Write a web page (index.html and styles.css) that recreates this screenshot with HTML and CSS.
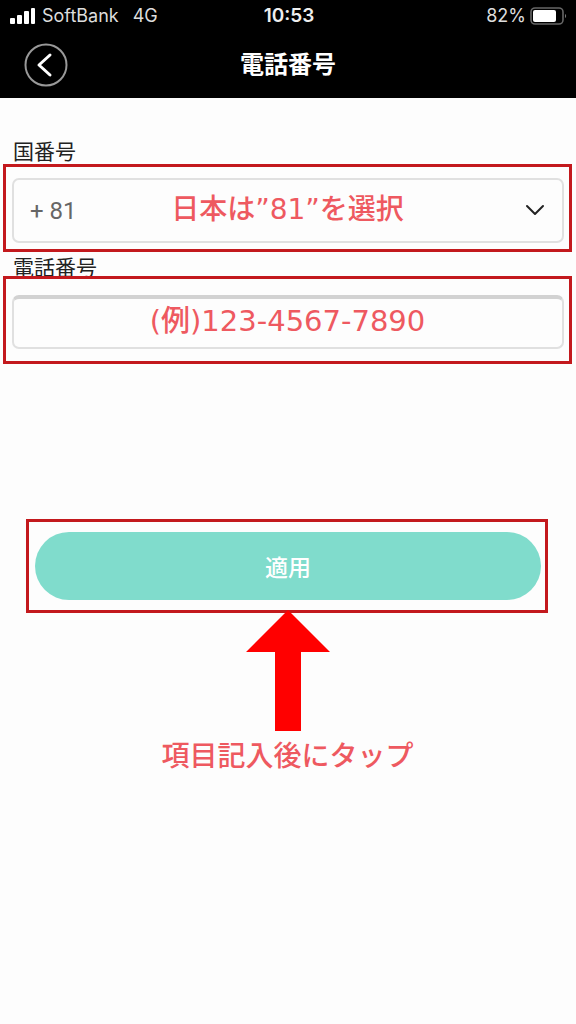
FILE: index.html
```
<!DOCTYPE html>
<html lang="ja">
<head>
  <meta charset="UTF-8">
  <title>電話番号</title>
  <meta name="viewport" content="width=device-width, initial-scale=1" />
  <link rel="stylesheet" href="styles.css">
</head>
<body>
  <header>
    <div class="status">
      <div class="carrier">
        <svg width="26" height="18" viewBox="0 0 26 18" fill="#fff">
          <rect x="0" y="11" width="5" height="6" rx="1" />
          <rect x="7" y="8" width="5" height="9" rx="1" />
          <rect x="14" y="4" width="5" height="13" rx="1" />
          <rect x="21" y="1" width="4" height="16" rx="1" />
        </svg>
        <span>SoftBank</span>
        <span class="network">4G</span>
      </div>
      <div class="time">10:53</div>
      <div class="battery">
        <span>82%</span>
        <svg width="38" height="20" viewBox="0 0 38 20">
          <rect x="1" y="2" width="32" height="16" rx="4" fill="none" stroke="#666" stroke-width="1.6" />
          <rect x="3" y="4" width="23" height="12" rx="2" fill="#fff" />
          <path d="M35 8c1.500 .6 1.500 3.400 0 4z" fill="#777" />
        </svg>
      </div>
    </div>
    <div class="nav">
      <button class="back" aria-label="戻る">
        <svg width="44" height="44" viewBox="0 0 44 44" fill="none">
          <circle cx="22" cy="22" r="20.500" stroke="#999" stroke-width="2" />
          <path d="M26 12l-11 10 11 10" stroke="#fff" stroke-width="3" stroke-linecap="round" stroke-linejoin="round" />
        </svg>
      </button>
      <h1>電話番号</h1>
      <span></span>
    </div>
  </header>

  <main>
    <label for="country">国番号</label>
    <div class="frame">
      <select id="country">
        <option value="81">+ 81</option>
      </select>
      <svg class="chevron" width="20" height="12" viewBox="0 0 20 12" fill="none">
        <path d="M2 2l8 8 8-8" stroke="#222" stroke-width="2" stroke-linecap="round" stroke-linejoin="round" />
      </svg>
      <span class="note">日本は”81”を選択</span>
    </div>

    <label for="phone">電話番号</label>
    <div class="frame phone">
      <input id="phone" type="tel" />
      <span class="note">(例)123-4567-7890</span>
    </div>

    <div class="frame submit">
      <button class="apply">適用</button>
    </div>
    <div class="guide">
      <svg width="84" height="121" viewBox="0 0 84 121">
        <path d="M42 0L84 42H55V121H29V42H0z" fill="#f00" />
      </svg>
      <p>項目記入後にタップ</p>
    </div>
  </main>
</body>
</html>
```

FILE: styles.css
```
* { box-sizing: border-box; }
body { margin: 0; font-family: Roboto, "Noto Sans CJK JP", sans-serif; background: #fdfdfd; color: #222; }

header { background: #000; color: #fff; height: 98px; }
.status { display: grid; grid-template-columns: 1fr auto 1fr; align-items: center; height: 32px; padding: 0 8px 0 10px; font: 18px/24px Inter, sans-serif; color: #ddd; }
.carrier { display: flex; align-items: center; gap: 6px; }
.network { margin-left: 8px; }
.time { font-size: 19px; font-weight: 600; color: #eee; }
.battery { display: flex; align-items: center; justify-content: flex-end; gap: 4px; }
.nav { display: grid; grid-template-columns: 1fr auto 1fr; align-items: center; height: 66px; padding: 0 24px; }
.back { justify-self: start; display: block; width: 44px; height: 44px; padding: 0; border: none; background: none; cursor: pointer; }
h1 { margin: 0; font-size: 24px; line-height: 32px; font-weight: 700; }

main { padding: 40px 4px 0 3px; }
label { display: block; height: 26px; margin-left: 10px; font-size: 21px; line-height: 28px; }
.frame { position: relative; height: 88px; margin-bottom: 2px; padding: 11px 5px 0 6px; border: 3px solid #c3191d; background: #fdfdfd; }
.frame select, .frame input { display: block; width: 100%; border: 2px solid #e0e0e0; border-radius: 7px; background: #fdfdfd; font: 24px/28px Roboto, sans-serif; color: #666; }
.frame select { height: 65px; padding: 0 16px; appearance: none; }
.frame input { height: 54px; margin-top: 5px; padding: 0 16px; border-top: 4px solid #d2d2d2; }
.chevron { position: absolute; right: 24px; top: 37px; pointer-events: none; }
.note { position: absolute; left: 0; right: 0; top: 21px; text-align: center; pointer-events: none; }
.note, .guide p { font: 500 28px/44px "DejaVu Sans", "Noto Sans CJK JP", sans-serif; color: #ee5960; }
/* the frame covers the foot of its label */
.phone { margin-top: -4px; }
.phone .note { top: 20px; font-size: 29px; }

.submit { height: 94px; margin: 155px 24px 0 23px; padding: 10px 4px 0 6px; }
.apply { display: block; width: 100%; height: 68px; padding: 0; border: none; border-radius: 34px; background: #80dccc; color: #fff; font: 500 23px/32px "Noto Sans CJK JP", sans-serif; cursor: pointer; }
.guide { position: relative; display: flex; flex-direction: column; align-items: center; margin-top: -3px; }
.guide p { margin: 4px 0 0; }
```
